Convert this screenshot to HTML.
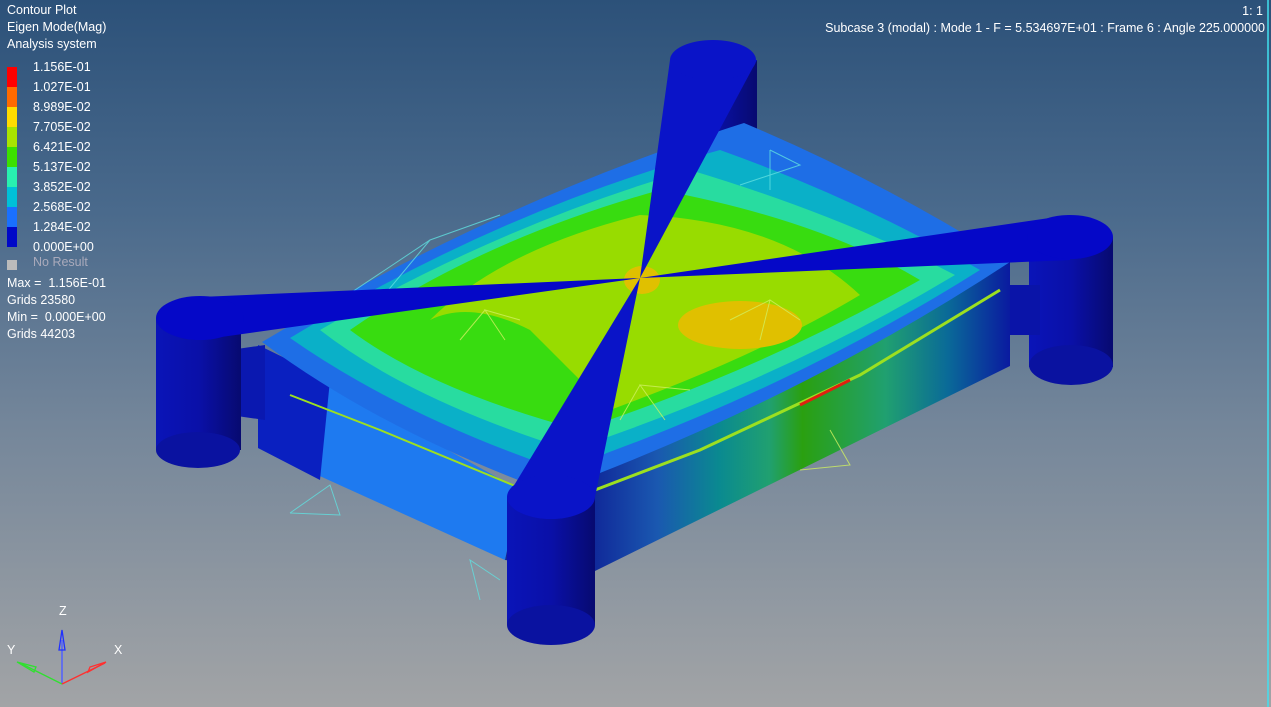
<!DOCTYPE html>
<html><head><meta charset="utf-8"><style>
html,body{margin:0;padding:0}
body{width:1271px;height:707px;overflow:hidden;position:relative;font-family:"Liberation Sans",sans-serif;
background:linear-gradient(#2c5179 0%,#4a6a8c 30%,#74869a 60%,#a2a4a6 100%);color:#fff}
.t{position:absolute;font-size:12.5px;line-height:17px;white-space:nowrap}
.lg{position:absolute;left:33px;font-size:12.5px;line-height:14px}
</style></head><body>
<svg width="1271" height="707" style="position:absolute;left:0;top:0">
<defs>
<linearGradient id="cyl" x1="0" x2="1"><stop offset="0" stop-color="#0a14b8"/><stop offset=".5" stop-color="#0a10a8"/><stop offset="1" stop-color="#070a70"/></linearGradient>
<linearGradient id="rs" x1="595" y1="0" x2="1010" y2="0" gradientUnits="userSpaceOnUse">
<stop offset="0" stop-color="#102a9a"/><stop offset=".15" stop-color="#1a58b0"/><stop offset=".3" stop-color="#0a8a90"/><stop offset=".42" stop-color="#20a070"/><stop offset=".5" stop-color="#2aa010"/><stop offset=".7" stop-color="#20a070"/><stop offset=".85" stop-color="#0a6a98"/><stop offset="1" stop-color="#0a1aa0"/></linearGradient>
</defs>
<!-- top cylinder body -->
<rect x="670" y="60" width="87" height="75" fill="url(#cyl)"/>
<!-- right cylinder -->
<rect x="1029" y="237" width="84" height="130" fill="url(#cyl)"/>
<ellipse cx="1071" cy="365" rx="42" ry="20" fill="#0a12a0"/>
<rect x="1010" y="285" width="30" height="50" fill="#0a14a8"/>
<!-- sides -->
<polygon points="258,345 520,490 505,560 258,448" fill="#1e7af0"/>
<polygon points="258,345 330,380 320,480 258,448" fill="#0a20c0"/>
<polygon points="520,490 1010,262 1010,366 595,571 505,560" fill="url(#rs)"/>
<polygon points="230,350 265,345 265,420 230,415" fill="#0a18b0"/>
<!-- top surface contours -->
<path d="M744,123 Q880,180 1010,262 Q800,400 550,492 Q380,430 262,342 Q500,200 744,123Z" fill="#1e6ee6"/>
<path d="M720,150 Q860,200 980,270 Q790,390 560,470 Q400,415 290,338 Q500,210 720,150Z" fill="#0ab0c8"/>
<path d="M690,170 Q840,215 955,275 Q780,380 570,450 Q410,400 320,330 Q500,225 690,170Z" fill="#28dca0"/>
<path d="M660,190 Q820,220 920,280 Q760,370 580,430 Q430,390 350,330 Q480,240 660,190Z" fill="#38dc10"/>
<path d="M640,215 Q780,220 860,295 Q760,355 610,410 Q560,360 530,330 Q470,300 430,320 Q500,250 640,215Z" fill="#98dc00"/>
<ellipse cx="740" cy="325" rx="62" ry="24" fill="#e0c000"/>
<ellipse cx="642" cy="280" rx="18" ry="14" fill="#e0c000"/>
<!-- edge highlights -->
<polyline points="290,395 380,430 520,488" stroke="#9ce020" stroke-width="2" fill="none"/>
<polyline points="595,490 700,450 860,375 1000,290" stroke="#9ce020" stroke-width="3" fill="none"/>
<polyline points="800,405 850,380" stroke="#e02010" stroke-width="3" fill="none"/>
<!-- some wire lines -->
<g stroke="#60e0e0" stroke-width="1" fill="none" opacity=".8">
<polyline points="340,300 430,240 500,215"/><polyline points="430,240 380,300"/>
<polyline points="290,513 330,485 340,515 290,513"/><polyline points="480,600 470,560 500,580"/>
<polyline points="770,150 800,165 740,185"/><polyline points="770,150 770,190"/>
</g>
<g stroke="#d0f060" stroke-width="1" fill="none" opacity=".8">
<polyline points="485,310 460,340 485,310 520,320 485,310 505,340"/>
<polyline points="770,300 730,320 770,300 800,320 770,300 760,340"/>
<polyline points="640,385 620,420 640,385 690,390 640,385 665,420"/>
<polyline points="800,470 850,465 830,430"/>
</g>
<!-- left cylinder -->
<rect x="156" y="318" width="85" height="132" fill="url(#cyl)"/>
<ellipse cx="198" cy="450" rx="42" ry="18" fill="#0a12a0"/>
<!-- bars -->
<polygon points="200,297 640,278 200,340" fill="#0508c8"/>
<ellipse cx="200" cy="318" rx="44" ry="22" fill="#0508c8"/>
<polygon points="640,278 1070,215 1070,260" fill="#0508c8"/>
<ellipse cx="1070" cy="237" rx="43" ry="22" fill="#0508c8"/>
<polygon points="670,60 757,60 640,278" fill="#0a14c8"/>
<ellipse cx="713" cy="60" rx="43" ry="20" fill="#0a14c8"/>
<!-- bottom cylinder -->
<rect x="507" y="497" width="88" height="128" fill="url(#cyl)"/>
<ellipse cx="551" cy="625" rx="44" ry="20" fill="#0a12a0"/>
<polygon points="640,278 507,497 595,497" fill="#0a14c8"/>
<ellipse cx="551" cy="497" rx="44" ry="22" fill="#0a14c8"/>
<!-- triad -->
<line x1="62" y1="684" x2="62" y2="640" stroke="#5060ff" stroke-width="1.5"/>
<polygon points="62,630 59,650 65,650" fill="none" stroke="#2030ff" stroke-width="1.3"/>
<line x1="62" y1="684" x2="22" y2="664" stroke="#30e030" stroke-width="1.3"/>
<polygon points="17,662 34,672 36,667" fill="none" stroke="#30e030" stroke-width="1.3"/>
<line x1="62" y1="684" x2="105" y2="663" stroke="#ff3030" stroke-width="1.3"/>
<polygon points="106,662 88,672 90,667" fill="none" stroke="#ff3030" stroke-width="1.3"/>
<line x1="1268" y1="0" x2="1268" y2="707" stroke="#40e0f0" stroke-width="1.5"/>
</svg>
<div class="t" style="left:7px;top:2px">Contour Plot<br>Eigen Mode(Mag)<br>Analysis system</div>
<div class="t" style="right:8px;top:3px">1: 1</div>
<div class="t" style="right:6px;top:20px">Subcase 3 (modal) : Mode 1 - F = 5.534697E+01 : Frame 6 : Angle 225.000000</div>
<div style="position:absolute;left:7px;top:67px;width:10px">
<div style="height:20px;background:#ff0000"></div><div style="height:20px;background:#ff6a00"></div><div style="height:20px;background:#ffdc00"></div><div style="height:20px;background:#a8e400"></div><div style="height:20px;background:#3ce000"></div><div style="height:20px;background:#28f0b0"></div><div style="height:20px;background:#00c0d8"></div><div style="height:20px;background:#1a70ff"></div><div style="height:20px;background:#0008c8"></div></div>
<div class="lg" style="top:60px">1.156E-01</div><div class="lg" style="top:80px">1.027E-01</div><div class="lg" style="top:100px">8.989E-02</div><div class="lg" style="top:120px">7.705E-02</div><div class="lg" style="top:140px">6.421E-02</div><div class="lg" style="top:160px">5.137E-02</div><div class="lg" style="top:180px">3.852E-02</div><div class="lg" style="top:200px">2.568E-02</div><div class="lg" style="top:220px">1.284E-02</div><div class="lg" style="top:240px">0.000E+00</div>
<div style="position:absolute;left:7px;top:260px;width:10px;height:10px;background:#bbb"></div>
<div class="lg" style="top:255px;color:#aab">No Result</div>
<div class="t" style="left:7px;top:275px">Max =&nbsp; 1.156E-01<br>Grids 23580<br>Min =&nbsp; 0.000E+00<br>Grids 44203</div>
<div class="t" style="left:59px;top:603px">Z</div>
<div class="t" style="left:7px;top:642px">Y</div>
<div class="t" style="left:114px;top:642px">X</div>
</body></html>
